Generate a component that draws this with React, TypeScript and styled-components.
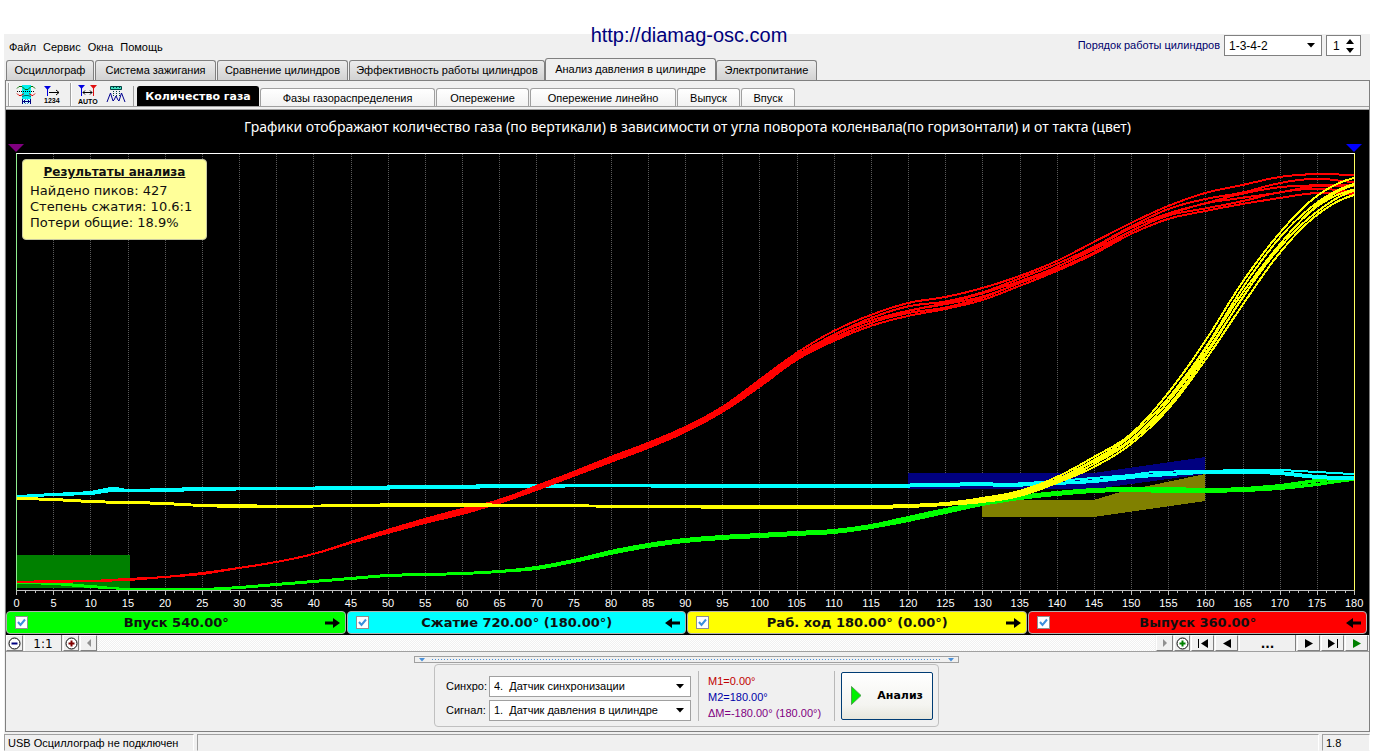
import React from "react";
import styled, { createGlobalStyle, css } from "styled-components";

const GlobalStyle = createGlobalStyle`
  *, *::before, *::after { box-sizing: border-box; }
  body { margin: 0; background: #fff; }
  button, input, select { font: inherit; color: inherit; margin: 0; }
`;

const ui = `"Liberation Sans", Arial, sans-serif`;
const verdana = `"DejaVu Sans", Verdana, sans-serif`;
const humanist = `"Noto Sans", Verdana, sans-serif`;

/* ---------- frame ---------- */

const Page = styled.div`
  display: flex;
  flex-direction: column;
  min-height: 100vh;
  padding: 34px 12px 4px 4px;
  font: 11px/16px ${ui};
  color: #000;
`;

const SiteLink = styled.a`
  position: absolute;
  top: 23px;
  left: 0;
  right: 4px;
  width: max-content;
  margin: 0 auto;
  font-size: 20px;
  line-height: 24px;
  color: #00007c;
  text-decoration: none;
`;

const Window = styled.div`
  flex: 1;
  display: flex;
  flex-direction: column;
  background: #f0f0f0;
`;

const Header = styled.header`
  display: flex;
  justify-content: space-between;
  height: 24px;
  padding: 1px 9px 0 5px;
`;

const Menu = styled.nav`
  display: flex;
  align-items: flex-start;
  gap: 7px;
`;

const MenuItem = styled.button`
  padding: 4px 0 0;
  border: 0;
  background: none;
`;

const HeaderTools = styled.div`
  display: flex;
  align-items: flex-start;
  gap: 4px;
  font-size: 12px;
`;

const OrderLabel = styled.label`
  font-size: 11px;
  line-height: 21px;
  color: #00006c;
`;

const SelectFrame = styled.span<{ $width: number; $tone?: string }>`
  display: grid;
  align-items: center;
  width: ${(p) => p.$width}px;
  height: 21px;
  border: 1px solid ${(p) => p.$tone ?? "#808080"};
  background: #fff;

  > * { grid-area: 1 / 1; }
  > svg { justify-self: end; margin-right: 6px; pointer-events: none; }
`;

const Select = styled.select`
  appearance: none;
  width: 100%;
  height: 19px;
  padding: 0 18px 0 4px;
  border: 0;
  background: transparent;
`;

const NumberInput = styled.input`
  appearance: textfield;
  width: 100%;
  height: 19px;
  padding: 0 18px 0 6px;
  border: 0;
  background: transparent;
  &::-webkit-inner-spin-button { display: none; }
`;

/* ---------- tabs ---------- */

const MainTabs = styled.div`
  display: flex;
  align-items: flex-end;
  height: 22px;
  padding-left: 2px;
`;

const MainTab = styled.button<{ $width: number; $active?: boolean }>`
  width: ${(p) => p.$width}px;
  height: 20px;
  padding: 0 0 2px;
  margin-right: 1px;
  border: 1px solid #808080;
  border-bottom: 0;
  border-radius: 3px 3px 0 0;
  background: linear-gradient(#ececec, #d2d2d2);
  white-space: nowrap;
  ${(p) =>
    p.$active &&
    css`
      height: 23px;
      margin: 0 0 -1px -1px;
      background: #f0f0f0;
    `}
`;

const Panel = styled.main`
  flex: 1;
  display: flex;
  flex-direction: column;
  margin-left: 1px;
  border: 1px solid #808080;
`;

const Toolbar = styled.div`
  display: flex;
  align-items: flex-end;
  height: 26px;
  padding-left: 2px;
  border-bottom: 1px solid #a0a0a0;
`;

const ToolGroup = styled.div<{ $width: number }>`
  display: flex;
  align-items: center;
  gap: 8px;
  width: ${(p) => p.$width}px;
  height: 23px;
  padding-left: 7px;
  border-left: 1px solid #a0a0a0;
  box-shadow: inset 1px 0 #fff;
`;

const ToolButton = styled.button`
  display: flex;
  padding: 0;
  border: 0;
  background: none;
`;

const ViewTabs = styled.div`
  display: flex;
  align-items: flex-end;
  gap: 1px;
  padding-left: 3px;
  border-left: 1px solid #a0a0a0;
`;

const ViewTab = styled.button<{ $width: number; $active?: boolean }>`
  width: ${(p) => p.$width}px;
  height: 18px;
  padding: 1px 0 0;
  border: 1px solid #a0a0a0;
  border-bottom: 0;
  border-radius: 3px 3px 0 0;
  background: linear-gradient(#fff, #f2f2f2);
  white-space: nowrap;
  ${(p) =>
    p.$active &&
    css`
      height: 20px;
      border-color: #000;
      background: #000;
      color: #fff;
      font: bold 11px/16px ${verdana};
    `}
`;

/* ---------- chart ---------- */

const ChartPane = styled.section`
  flex: 1;
  display: flex;
  flex-direction: column;
  margin-top: 2px;
  border-top: 1px solid #a0a0a0;
  background: #000;
  color: #fff;
`;

const ChartTitle = styled.h1`
  margin: 0;
  font: 14px/34px ${humanist};
  text-align: center;
`;

const Markers = styled.div`
  display: flex;
  justify-content: space-between;
  height: 9px;
  padding: 0 7px 0 2px;
`;

const Plot = styled.div`
  position: relative;
  flex: 1 1 200px;
  display: grid;
  grid-template-rows: minmax(0, 1fr);
  margin: 0 14px 0 10px;
  border: 1px solid;
  border-color: #fff #ffff60 #c0c0c0 #90ee90;

  > svg { width: 100%; height: 100%; }
`;

const Axis = styled.div`
  margin: 0 14px 0 10px;

  > svg { display: block; width: 100%; height: 5px; overflow: visible; }
`;

const AxisLabels = styled.div`
  display: flex;
  justify-content: space-between;
  margin-bottom: 1px;
  line-height: 14px;
`;

const AxisLabel = styled.span`
  display: flex;
  justify-content: center;
  width: 1px;
`;

const Results = styled.aside`
  position: absolute;
  top: 5px;
  left: 5px;
  width: 185px;
  height: 81px;
  padding: 4px 7px;
  border: 1px solid #c8c8a0;
  border-radius: 4px;
  background: #ffff99;
  color: #101010;
  font: 13px/16px ${verdana};
`;

const ResultsTitle = styled.h2`
  margin: 0 0 3px;
  font: bold 12px/16px ${verdana};
  text-align: center;
  text-decoration: underline;
`;

const ResultLine = styled.p`
  margin: 0;
  white-space: nowrap;
`;

/* ---------- strokes of the engine cycle ---------- */

const Phases = styled.div`
  display: grid;
  grid-template-columns: repeat(4, 1fr);
  gap: 1px;
  padding: 0 2px 1px 0;
`;

const Phase = styled.label<{ $color: string }>`
  display: flex;
  align-items: center;
  height: 23px;
  padding: 0 5px 0 8px;
  border: 1px solid #b0b0b0;
  border-radius: 4px;
  background: ${(p) => p.$color};
  color: #101010;
  font: bold 13px/16px ${verdana};
`;

const PhaseCheck = styled.input`
  appearance: none;
  width: 13px;
  height: 13px;
  border: 1px solid #8e8f8f;
  background: #fff;

  & + svg { visibility: hidden; pointer-events: none; }
  &:checked + svg { visibility: visible; }
`;

const CheckBox = styled.span`
  display: grid;
  > * { grid-area: 1 / 1; }
`;

const PhaseName = styled.span`
  flex: 1;
  text-align: center;
`;

/* ---------- scroll strip ---------- */

const Strip = styled.div`
  display: flex;
  gap: 1px;
  height: 17px;
  padding-right: 1px;
  border-bottom: 1px solid #a0a0a0;
`;

const StripButton = styled.button<{ $width: number }>`
  display: flex;
  align-items: center;
  justify-content: center;
  flex: none;
  width: ${(p) => p.$width}px;
  padding: 0;
  border: 1px solid;
  border-color: #fff #808080 #808080 #fff;
  background: #f0f0f0;
`;

const StripText = styled.span<{ $width: number; $bold?: boolean }>`
  flex: none;
  width: ${(p) => p.$width}px;
  overflow: hidden;
  background: #f0f0f0;
  font: ${(p) => (p.$bold ? "bold" : "normal")} 12px/18px ${verdana};
  text-align: center;
  border-left: 1px solid #fff;
  border-right: 1px solid #808080;
`;

const Track = styled.div`
  flex: 1;
  background: repeating-conic-gradient(#fff 0 25%, #f0f0f0 0 50%) 0 0 / 2px 2px;
`;

/* ---------- analysis controls ---------- */

const Controls = styled.section`
  display: flex;
  flex-direction: column;
  align-items: center;
  padding: 4px 2px 4px 0;
`;

const Splitter = styled.div`
  display: flex;
  align-items: center;
  gap: 6px;
  width: 545px;
  height: 7px;
  padding: 0 3px;
  border: 1px solid #a0a0a0;
`;

const SplitterDots = styled.span`
  flex: 1;
  height: 1px;
  background: repeating-linear-gradient(90deg, #4a90d9 0 1px, transparent 1px 3px);
`;

const Group = styled.div`
  display: flex;
  align-items: center;
  width: 505px;
  height: 63px;
  margin-top: 1px;
  padding: 0 5px 0 11px;
  border: 1px solid #c0c0c0;
  border-radius: 4px;
`;

const Sources = styled.div`
  display: grid;
  grid-template-columns: 43px 202px;
  row-gap: 3px;
  align-items: center;
  margin-right: 7px;
  padding-top: 5px;
`;

const Readings = styled.div`
  width: 137px;
  height: 50px;
  padding: 2px 0 0 9px;
  border: 1px solid #b8b8b8;
  border-width: 0 1px;
  white-space: nowrap;
`;

const Reading = styled.div<{ $color: string }>`
  color: ${(p) => p.$color};
`;

const AnalyzeButton = styled.button`
  display: flex;
  align-items: center;
  gap: 16px;
  width: 92px;
  height: 48px;
  margin-left: auto;
  padding: 0 9px;
  border: 1px solid #003c74;
  border-radius: 2px;
  background: linear-gradient(#fff, #f4f4f0 70%, #e6e6dc);
  font: bold 11px/16px ${verdana};
`;

/* ---------- status bar ---------- */

const StatusBar = styled.footer`
  display: flex;
  gap: 3px;
  height: 19px;
  padding-top: 2px;
`;

const StatusCell = styled.div<{ $width?: number }>`
  flex: ${(p) => (p.$width ? `0 0 ${p.$width}px` : "1")};
  padding-left: 3px;
  border: 1px solid;
  border-color: #a0a0a0 #fff transparent #a0a0a0;
`;

/* ---------- chart data ---------- */

// [crank angle, upper envelope, lower envelope] in plot pixels
type Band = [number, number, number][];

const W = 1338;
const H = 437;
const toX = (deg: number) => (deg / 180) * W;

const intake: Band = [
  [0, 429, 430], [5, 430, 431], [10, 433, 434], [15, 436, 436], [20, 436, 437],
  [25, 436, 437], [30, 434, 435], [35, 431, 432], [40, 428, 429], [45, 425, 426],
  [50, 422, 423], [55, 421, 422], [60, 420, 421], [65, 418, 419], [70, 414, 416],
  [75, 407, 409], [80, 398, 401], [85, 391, 394], [90, 386, 389], [95, 383, 386],
  [100, 381, 384], [105, 379, 382], [110, 377, 380], [115, 372, 375],
  [120, 364, 368], [125, 356, 360], [130, 349, 352], [135, 343, 346],
  [140, 339, 342], [145, 336, 339], [150, 335, 338], [155, 335, 339],
  [160, 336, 339], [165, 335, 338], [170, 332, 336], [175, 327, 332],
  [180, 325, 327],
];

const compression: Band = [
  [0, 343, 344], [5, 341, 342], [10, 339, 341], [13, 335, 338], [15, 337, 338],
  [20, 336, 338], [25, 335, 337], [35, 335, 336], [45, 334, 336], [55, 333, 335],
  [70, 332, 334], [80, 332, 333], [90, 332, 334], [105, 332, 334], [115, 332, 334],
  [125, 331, 333], [130, 330, 332], [133, 331, 333], [140, 328, 331],
  [145, 325, 329], [150, 322, 325], [153, 319, 323], [160, 318, 320],
  [165, 317, 320], [170, 317, 321], [175, 319, 325], [180, 321, 326],
];

const power: Band = [
  [0, 345, 346], [5, 346, 347], [10, 348, 349], [15, 349, 350], [20, 350, 351],
  [25, 352, 353], [30, 352, 354], [35, 353, 354], [45, 352, 353], [55, 351, 353],
  [70, 352, 353], [85, 353, 354], [100, 353, 355], [115, 353, 355],
  [120, 352, 354], [125, 350, 352], [130, 345, 349], [135, 338, 343],
  [140, 324, 330], [145, 304, 314], [150, 281, 291], [155, 240, 256],
  [160, 188, 207], [165, 129, 152], [170, 80, 100], [175, 43, 62], [180, 25, 42],
];

const exhaust: Band = [
  [0, 429, 429], [5, 428, 429], [10, 428, 428], [15, 426, 427], [20, 424, 424],
  [25, 420, 421], [30, 415, 415], [35, 409, 409], [40, 401, 401], [45, 389, 390],
  [50, 377, 380], [55, 366, 370], [60, 356, 361], [65, 347, 350], [70, 333, 337],
  [75, 319, 323], [80, 304, 309], [85, 290, 295], [90, 274, 279], [95, 254, 259],
  [100, 227, 234], [105, 200, 207], [110, 178, 188], [115, 162, 173],
  [120, 150, 163], [125, 144, 156], [130, 135, 147], [135, 123, 133],
  [140, 108, 118], [145, 89, 101], [150, 70, 81], [155, 53, 66], [160, 40, 58],
  [165, 32, 51], [170, 24, 45], [175, 21, 40], [180, 22, 41],
];

const hermite = (p0: number, p1: number, p2: number, p3: number, t: number) => {
  const a = (p2 - p0) / 2;
  const b = (p3 - p1) / 2;
  return (
    (2 * t ** 3 - 3 * t ** 2 + 1) * p1 + (t ** 3 - 2 * t ** 2 + t) * a +
    (-2 * t ** 3 + 3 * t ** 2) * p2 + (t ** 3 - t ** 2) * b
  );
};

function strand(band: Band, share: number, seed: number) {
  const y = (i: number) => {
    const [, hi, lo] = band[Math.max(0, Math.min(band.length - 1, i))];
    const wave = Math.sin(i * 1.7 + seed * 2.3) * 0.08;
    const at = share === 0 || share === 1 ? share : share + wave;
    return hi + (lo - hi) * at;
  };
  const points: string[] = [];
  for (let i = 0; i < band.length - 1; i++) {
    const x1 = band[i][0];
    const x2 = band[i + 1][0];
    for (let s = 0; s < 5; s++) {
      const t = s / 5;
      points.push(
        `${toX(x1 + (x2 - x1) * t).toFixed(1)},${hermite(y(i - 1), y(i), y(i + 1), y(i + 2), t).toFixed(1)}`
      );
    }
  }
  points.push(`${W},${y(band.length - 1).toFixed(1)}`);
  return points.join(" ");
}

const traces = [
  { color: "#00ff00", band: intake, shares: [0, 0.35, 0.7, 1] },
  { color: "#00ffff", band: compression, shares: [0, 0.6, 1] },
  { color: "#ff0000", band: exhaust, shares: [0, 0.32, 0.52, 0.66, 0.8, 1] },
  { color: "#ffff00", band: power, shares: [0, 0.3, 0.5, 0.62, 0.75, 1] },
];

const zone = (pts: [number, number][]) => pts.map(([d, y]) => `${toX(d)},${y}`).join(" ");
const degrees = Array.from({ length: 37 }, (_, i) => i * 5);
const minorTicks = Array.from({ length: 145 }, (_, i) => i * 1.25);

const Traces = () => (
  <svg viewBox={`1 1 ${W - 1} ${H - 1}`} preserveAspectRatio="none" shapeRendering="crispEdges" aria-label="Количество газа">
    {degrees.slice(1, -1).map((d) => (
      <line key={d} x1={Math.round(toX(d)) + 0.5} x2={Math.round(toX(d)) + 0.5} y1="1" y2={H} stroke="#5a5a5a" strokeDasharray="1 1" />
    ))}
    <polygon fill="#008000" points={zone([[0, 402], [15.3, 402], [15.3, 435], [0, 435]])} />
    <polygon fill="#000080" points={zone([[120, 320], [145, 320], [160, 304], [160, 321], [145, 336], [120, 336]])} />
    <polygon fill="#808000" points={zone([[130, 347], [145, 347], [149, 338], [160, 321], [160, 348], [145, 364], [130, 364]])} />
    {traces.map((t) =>
      t.shares.map((s, i) => (
        <polyline key={t.color + i} points={strand(t.band, s, i)} fill="none" stroke={t.color} strokeWidth="2" />
      ))
    )}
  </svg>
);

/* ---------- small drawings ---------- */

const DropArrow = () => (
  <svg width="8" height="5" viewBox="0 0 8 5"><path d="M0 0h8L4 4.5z" /></svg>
);

const SpinArrows = () => (
  <svg width="8" height="14" viewBox="0 0 8 14"><path d="M0 5h8L4 0zM0 9h8l-4 5z" /></svg>
);

const CheckMark = () => (
  <svg width="13" height="13" viewBox="0 0 13 13"><path d="M3 6l2.500 3L10 3.500" fill="none" stroke="#3c8fdc" strokeWidth="2" /></svg>
);

const PhaseArrow = ({ left }: { left?: boolean }) => (
  <svg width="15" height="10" viewBox="0 0 15 10">
    <path d={left ? "M15 3.500H7V0L0 5l7 5V6.500h8z" : "M0 3.500h8V0l7 5-7 5V6.500H0z"} />
  </svg>
);

const ZoomIcon = ({ color, plus }: { color: string; plus?: boolean }) => (
  <svg width="13" height="13" viewBox="0 0 13 13" fill="none">
    <circle cx="6.500" cy="6.500" r="5.500" stroke="#000" fill="#fff" />
    <path d={plus ? "M3.500 6.500h6M6.500 3.500v6" : "M3.500 6.500h6"} stroke={color} strokeWidth="2" />
  </svg>
);

const Glyph = ({ d, color = "#000" }: { d: string; color?: string }) => (
  <svg width="12" height="9" viewBox="0 0 12 9" fill={color}><path d={d} /></svg>
);

const WindowIcon = () => (
  <svg width="20" height="20" viewBox="0 0 20 20" fill="none">
    <path fill="#00f0f0" d="M6 0h9v14H6z" />
    <path fill="#c8ffff" d="M6 14h9v5H6z" />
    <path stroke="#007000" d="M1 3.500L3 1.500h3l3 3h3l3-3h2l2 2" />
    <path stroke="#e00000" d="M1 8.500l2 2h2l3-2M13 8.500l3 2h1l2-2" />
    <path stroke="#000" strokeDasharray="1 1" d="M1 6.500h18" />
    <path stroke="#006868" d="M6 11.500l3-1h3l3 1" />
    <path stroke="#000080" d="M6.500 14v5M14.500 14v5M7 16.500h7M9.500 14.500l-2 2 2 2M11.500 14.500l2 2-2 2" />
  </svg>
);

const NumberIcon = () => (
  <svg width="18" height="20" viewBox="0 0 18 20" fill="none">
    <path fill="#0000e0" d="M0 1h7L3.500 5z" />
    <path stroke="#0000e0" strokeWidth="1" d="M3.500 4v7" />
    <path stroke="#000" d="M5 7.500h10M12 5l3 2.500L12 10" />
    <text x="0" y="18" fill="#000" fontFamily={ui} fontSize="7" fontWeight="bold">1234</text>
  </svg>
);

const AutoIcon = () => (
  <svg width="20" height="20" viewBox="0 0 20 20" fill="none">
    <path fill="#0000e0" d="M0 0h7L3.500 4z" />
    <path fill="#e01010" d="M12 0h7l-3.500 4z" />
    <path stroke="#0000e0" d="M3.500 3v8" />
    <path stroke="#e01010" d="M15.500 3v8" />
    <path stroke="#000" d="M5 7.500h9M7 5.500l-2 2 2 2M12 5.500l2 2-2 2" />
    <text x="0" y="19" fill="#000" fontFamily={ui} fontSize="7" fontWeight="bold">AUTO</text>
  </svg>
);

const PeaksIcon = () => (
  <svg width="20" height="20" viewBox="0 0 20 20" fill="none">
    <path fill="#40e0c0" stroke="#004040" d="M4.500 1.500h11v3h-11z" />
    <path stroke="#004040" strokeDasharray="1 1" d="M7.500 2v9M10.500 2v9M13.500 2v9" />
    <path stroke="#000090" d="M1 17l3.500-9L7 16l1-1 2-4 2 4 1 1 2.500-8L19 17" />
  </svg>
);

/* ---------- page ---------- */

const mainTabs: [string, number][] = [
  ["Осциллограф", 88],
  ["Система зажигания", 121],
  ["Сравнение цилиндров", 131],
  ["Эффективность работы цилиндров", 196],
  ["Анализ давления в цилиндре", 171],
  ["Электропитание", 101],
];

const viewTabs: [string, number][] = [
  ["Количество газа", 122],
  ["Фазы газораспределения", 175],
  ["Опережение", 93],
  ["Опережение линейно", 146],
  ["Выпуск", 63],
  ["Впуск", 54],
];

const phases = [
  { name: "Впуск 540.00°", color: "#00ff00", left: false },
  { name: "Сжатие 720.00° (180.00°)", color: "#00ffff", left: true },
  { name: "Раб. ход 180.00° (0.00°)", color: "#ffff00", left: false },
  { name: "Выпуск 360.00°", color: "#ff0000", left: true },
];

export default function App() {
  return (
    <Page>
      <GlobalStyle />
      <SiteLink href="http://diamag-osc.com">http://diamag-osc.com</SiteLink>
      <Window>
        <Header>
          <Menu>
            {["Файл", "Сервис", "Окна", "Помощь"].map((m) => (
              <MenuItem key={m}>{m}</MenuItem>
            ))}
          </Menu>
          <HeaderTools>
            <OrderLabel htmlFor="order">Порядок работы цилиндров</OrderLabel>
            <SelectFrame $width={98}>
              <Select id="order"><option>1-3-4-2</option></Select>
              <DropArrow />
            </SelectFrame>
            <SelectFrame $width={35}>
              <NumberInput type="number" defaultValue={1} aria-label="Номер цилиндра" />
              <SpinArrows />
            </SelectFrame>
          </HeaderTools>
        </Header>

        <MainTabs role="tablist">
          {mainTabs.map(([name, width], i) => (
            <MainTab key={name} role="tab" aria-selected={i === 4} $width={width} $active={i === 4}>{name}</MainTab>
          ))}
        </MainTabs>

        <Panel>
          <Toolbar>
            <ToolGroup $width={62}>
              <ToolButton aria-label="Окно"><WindowIcon /></ToolButton>
              <ToolButton aria-label="Нумерация"><NumberIcon /></ToolButton>
            </ToolGroup>
            <ToolGroup $width={63}>
              <ToolButton aria-label="Авто"><AutoIcon /></ToolButton>
              <ToolButton aria-label="Пики"><PeaksIcon /></ToolButton>
            </ToolGroup>
            <ViewTabs role="tablist">
              {viewTabs.map(([name, width], i) => (
                <ViewTab key={name} role="tab" aria-selected={i === 0} $width={width} $active={i === 0}>{name}</ViewTab>
              ))}
            </ViewTabs>
          </Toolbar>

          <ChartPane>
            <ChartTitle>
              Графики отображают количество газа (по вертикали) в зависимости от угла поворота коленвала(по горизонтали) и от такта (цвет)
            </ChartTitle>
            <Markers>
              <svg width="16" height="8"><path d="M0 0h16L8 8z" fill="#800080" /></svg>
              <svg width="16" height="8"><path d="M0 0h16L8 8z" fill="#0000ff" /></svg>
            </Markers>
            <Plot>
              <Traces />
              <Results>
                <ResultsTitle>Результаты анализа</ResultsTitle>
                <ResultLine>Найдено пиков: 427</ResultLine>
                <ResultLine>Степень сжатия: 10.6:1</ResultLine>
                <ResultLine>Потери общие: 18.9%</ResultLine>
              </Results>
            </Plot>
            <Axis>
              <svg viewBox={`0 0 ${W + 1} 5`} preserveAspectRatio="none" shapeRendering="crispEdges" aria-hidden="true">
                {minorTicks.map((d) => (
                  <rect key={d} x={Math.round(toX(d))} width="1" height={d % 5 === 0 ? 4 : 2} fill="#c0c0c0" />
                ))}
              </svg>
              <AxisLabels>
                {degrees.map((d) => <AxisLabel key={d}>{d}</AxisLabel>)}
              </AxisLabels>
            </Axis>
            <Phases>
              {phases.map((p) => (
                <Phase key={p.name} $color={p.color}>
                  <CheckBox>
                    <PhaseCheck type="checkbox" defaultChecked />
                    <CheckMark />
                  </CheckBox>
                  <PhaseName>{p.name}</PhaseName>
                  <PhaseArrow left={p.left} />
                </Phase>
              ))}
            </Phases>
          </ChartPane>

          <Strip>
            <StripButton $width={17} aria-label="Уменьшить"><ZoomIcon color="#000080" /></StripButton>
            <StripText $width={38}>1:1</StripText>
            <StripButton $width={16} aria-label="Увеличить"><ZoomIcon color="#800000" plus /></StripButton>
            <StripButton $width={17} aria-label="Прокрутить влево"><Glyph d="M8 0v8L4 4z" color="#909090" /></StripButton>
            <Track />
            <StripButton $width={17} aria-label="Прокрутить вправо"><Glyph d="M4 0v8l4-4z" color="#909090" /></StripButton>
            <StripButton $width={16} aria-label="Добавить"><ZoomIcon color="#008000" plus /></StripButton>
            <StripButton $width={23} aria-label="В начало"><Glyph d="M1 0h1v9H1zM11 0v9L4 4.500z" /></StripButton>
            <StripButton $width={23} aria-label="Назад"><Glyph d="M10 0v9L2 4.500z" /></StripButton>
            <StripText $width={57} $bold>...</StripText>
            <StripButton $width={23} aria-label="Вперёд"><Glyph d="M2 0v9l8-4.500z" /></StripButton>
            <StripButton $width={23} aria-label="В конец"><Glyph d="M10 0h1v9h-1zM1 0v9l7-4.500z" /></StripButton>
            <StripButton $width={23} aria-label="Воспроизвести"><Glyph d="M2 0v9l8-4.500z" color="#008000" /></StripButton>
          </Strip>

          <Controls>
            <Splitter>
              <svg width="8" height="4"><path d="M1 0h6L4 3.500z" fill="#4a90d9" /></svg>
              <SplitterDots />
              <svg width="8" height="4"><path d="M1 0h6L4 3.500z" fill="#4a90d9" /></svg>
            </Splitter>
            <Group>
              <Sources>
                <label htmlFor="sync">Синхро:</label>
                <SelectFrame $width={202} $tone="#a0a0a0">
                  <Select id="sync"><option>{"4.\u00a0 Датчик синхронизации"}</option></Select>
                  <DropArrow />
                </SelectFrame>
                <label htmlFor="signal">Сигнал:</label>
                <SelectFrame $width={202} $tone="#a0a0a0">
                  <Select id="signal"><option>{"1.\u00a0 Датчик давления в цилиндре"}</option></Select>
                  <DropArrow />
                </SelectFrame>
              </Sources>
              <Readings>
                <Reading $color="#c00000">M1=0.00°</Reading>
                <Reading $color="#0000a8">M2=180.00°</Reading>
                <Reading $color="#800080">ΔM=-180.00° (180.00°)</Reading>
              </Readings>
              <AnalyzeButton>
                <svg width="11" height="20"><path d="M0.500 0.500v18l9.500-9z" fill="#00f000" stroke="#50a050" /></svg>
                Анализ
              </AnalyzeButton>
            </Group>
          </Controls>
        </Panel>

        <StatusBar>
          <StatusCell $width={190}>USB Осциллограф не подключен</StatusCell>
          <StatusCell />
          <StatusCell $width={48}>1.8</StatusCell>
        </StatusBar>
      </Window>
    </Page>
  );
}
